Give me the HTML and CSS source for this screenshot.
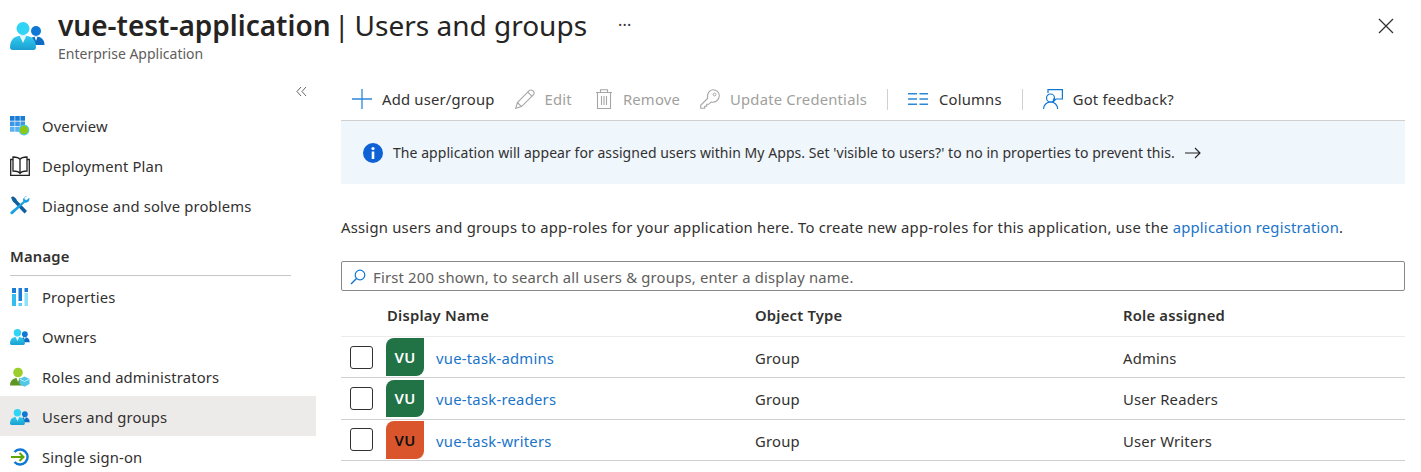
FILE: index.html
```html
<!DOCTYPE html>
<html lang="en">
<head>
    <meta charset="UTF-8">
    <meta name="viewport" content="width=device-width, initial-scale=1.0">
    <title>vue-test-application | Users and groups</title>
    <link rel="stylesheet" href="styles.css">
</head>
<body>

<svg class="sprite">
    <defs>
        <linearGradient id="bodyFill" x1="0" y1="0" x2="0" y2="1">
            <stop offset="0" stop-color="#32cdf0"/>
            <stop offset="1" stop-color="#1b9fd0"/>
        </linearGradient>
    </defs>
    <symbol id="people" viewBox="0 0 35 28">
        <circle cx="26" cy="9" r="5" fill="#0f78d4"/>
        <path d="M20 23c-1-5 1-8.500 6-8.500s8.500 3 8.500 8.500z" fill="#0f6cc4"/>
        <path d="M24.500 14.500h3L26 19z" fill="#fff"/>
        <circle cx="13" cy="6.500" r="6.500" fill="#32d4f5"/>
        <path d="M0 25.500C0 17 5 13.500 13 13.500s13 3.500 13 12c0 1.500-1 2.500-2.500 2.500h-21C1 28 0 27 0 25.500z" fill="url(#bodyFill)"/>
        <path d="M9.500 13.500h7L13 21z" fill="#e8f8fd"/>
    </symbol>
</svg>

<header class="page-header">
    <svg class="app-icon"><use href="#people"/></svg>
    <div class="title-block">
        <div class="title-line">
            <h1><b>vue-test-application</b><span class="title-bar">|</span>Users and groups</h1>
            <span class="more">···</span>
        </div>
        <div class="subtitle">Enterprise Application</div>
    </div>
    <svg class="close" viewBox="0 0 16 16"><path d="M1 1l14 14M15 1L1 15" stroke="#333" stroke-width="1.300" fill="none"/></svg>
</header>

<div class="layout">
    <nav class="sidebar">
        <div class="collapse">
            <svg viewBox="0 0 11 11"><path d="M5 1L1 5.500l4 4.500M10 1L6 5.500l4 4.500" stroke="#666" fill="none"/></svg>
        </div>
        <a class="nav-item">
            <svg viewBox="0 0 20 20"><path d="M0 0h4.600v4.800H0zM5.200 0h4.600v4.800H5.200zM10.400 0H15v4.800h-4.600z" fill="#1b7cd6"/><path d="M0 5.500h4.600v4.800H0zM5.200 5.500h4.600v4.800H5.200zM10.400 5.500H15v4.800h-4.600z" fill="#3a96e6"/><path d="M0 11h4.600v4.800H0zM5.200 11h4.600v4.800H5.200z" fill="#5ab0f0"/><circle cx="14" cy="14" r="4.800" fill="#8cc814" stroke="#50c7e8" stroke-width="1.200"/></svg>
            Overview
        </a>
        <a class="nav-item">
            <svg viewBox="0 0 20 20"><path d="M3 1c3 0 6 .8 7 2.500C11 1.800 14 1 17 1v14c-3 0-6 .8-7 2.500C9 15.800 6 15 3 15zM10 3.500v14" fill="none" stroke="#222" stroke-width="1.300"/><path d="M3 3.500H.7v15.800H19.300V3.500H17" fill="none" stroke="#222" stroke-width="1.300"/></svg>
            Deployment Plan
        </a>
        <a class="nav-item">
            <svg viewBox="0 0 20 20"><path d="M1 1.500l2-1.300 3 2.300 1 2 10 10.500-2.500 2.500L4.500 7 2.800 5.500z" fill="#0f5f9e"/><path d="M17.500 0c-2.500 0-4.500 2-4.500 4l.3 1.300L1 15.500c-.8.800-.8 1.500-.2 2.200s1.500.8 2.200 0L14.700 6.700c2.300.6 4.800-1.300 4.800-4l-.3-1-2.500 2.200-2-.5-.3-1.900z" fill="#1ba1e2"/></svg>
            Diagnose and solve problems
        </a>
        <div class="nav-heading">Manage</div>
        <a class="nav-item">
            <svg viewBox="0 0 20 20"><path d="M2 1h4v5H2z" fill="#1b7cd6"/><path d="M2 7h4v12H2z" fill="#32bff0"/><path d="M8.500 1h3.500v13H8.500z" fill="#1b7cd6"/><path d="M8.500 16h3.500v3H8.500z" fill="#5ad0f5"/><path d="M14.500 1H18v4h-3.500z" fill="#1b7cd6"/><path d="M14.500 6H18v13h-3.500z" fill="#8fe0fa"/></svg>
            Properties
        </a>
        <a class="nav-item">
            <svg><use href="#people"/></svg>
            Owners
        </a>
        <a class="nav-item">
            <svg viewBox="0 0 20 20"><circle cx="8" cy="5.500" r="4.800" fill="#9ccf2e"/><path d="M0 18.500c0-5 3-7.500 8-7.500s8 2.500 8 7.500z" fill="#5e9624"/><path d="M6.500 11h3L8 15z" fill="#fff"/><path d="M14.500 9.500l5 2.500v5l-5 2.800-5-2.800v-5z" fill="#50c7e8"/><path d="M9.500 12l5 2.500 5-2.500" stroke="#b5ecfa" fill="none"/></svg>
            Roles and administrators
        </a>
        <a class="nav-item nav-item-active">
            <svg><use href="#people"/></svg>
            Users and groups
        </a>
        <a class="nav-item">
            <svg viewBox="0 0 20 20"><path d="M4.500 5a7.500 7.500 0 1 1 0 10" fill="none" stroke="#0f78d4" stroke-width="2.400"/><path d="M1 10h12.500M9.500 6l4 4-4 4" fill="none" stroke="#5ea600" stroke-width="2"/></svg>
            Single sign-on
        </a>
    </nav>

    <main class="content">
        <div class="toolbar">
            <button class="tool">
                <svg viewBox="0 0 20 20"><path d="M10 0v20M0 10h20" stroke="#2b88d8" stroke-width="1.300" fill="none"/></svg>
                Add user/group
            </button>
            <button class="tool tool-off tool-edit">
                <svg viewBox="0 0 20 20"><path d="M.7 19.300l1.700-5.800L14.200 1.700c1-1 2.600-1 3.600 0l.5.500c1 1 1 2.600 0 3.600L6.500 17.600zM2.400 13.500l4.100 4.100M12.800 3.200l4 4" stroke="#a6a6a6" stroke-width="1.100" fill="none"/></svg>
                Edit
            </button>
            <button class="tool tool-off">
                <svg class="icon-narrow" viewBox="0 0 18 20"><path d="M1 3.500h16M5.500 3.500V.8h7v2.700M2.500 3.500v16h13v-16M6.500 7v9M9 7v9M11.500 7v9" stroke="#a6a6a6" stroke-width="1.100" fill="none"/></svg>
                Remove
            </button>
            <button class="tool tool-off">
                <svg viewBox="0 0 20 20"><path d="M7.500 9.500L.7 16.300v3h4v-2h2v-2h2l2.300-2.300c4 1 8.300-1.700 8.300-6.200 0-3.500-2.800-6.100-6.300-6.100S6.700 4.800 7.500 9.500z" stroke="#a6a6a6" stroke-width="1.100" fill="none"/><circle cx="14.500" cy="5.500" r="1.400" fill="none" stroke="#a6a6a6"/></svg>
                Update Credentials
            </button>
            <span class="tool-sep"></span>
            <button class="tool">
                <svg class="icon-wide" viewBox="0 0 20 12"><path d="M0 .8h9M0 6h9M0 11.200h9M11.500 .8h8.500M11.500 6h8.500M11.500 11.200h8.500" stroke="#2b88d8" stroke-width="1.400" fill="none"/></svg>
                Columns
            </button>
            <span class="tool-sep"></span>
            <button class="tool">
                <svg viewBox="0 0 20 20"><path d="M5 4V.6h14.400V10H14M16 10h-3l-2.500 2.500V9.500" stroke="#0f78d4" stroke-width="1.200" fill="none"/><circle cx="7.500" cy="9" r="4" stroke="#0f78d4" stroke-width="1.200" fill="none"/><path d="M.6 20c0-4 3-7 7-7s7 3 7 7" stroke="#0f78d4" stroke-width="1.200" fill="none"/></svg>
                Got feedback?
            </button>
        </div>

        <div class="banner">
            <svg class="info-icon" viewBox="0 0 20 20"><circle cx="10" cy="10" r="10" fill="#0f62d6"/><rect x="8.700" y="8.500" width="2.600" height="7.500" fill="#fff"/><circle cx="10" cy="5.500" r="1.600" fill="#fff"/></svg>
            <span>The application will appear for assigned users within My Apps. Set 'visible to users?' to no in properties to prevent this.</span>
            <svg class="arrow" viewBox="0 0 16 12"><path d="M0 6h15M10 1l5 5-5 5" stroke="#222" stroke-width="1.100" fill="none"/></svg>
        </div>

        <p class="intro">Assign users and groups to app-roles for your application here. To create new app-roles for this application, use the <a>application registration</a>.</p>

        <div class="search">
            <svg viewBox="0 0 16 16"><circle cx="10" cy="6" r="4.800" stroke="#0f78d4" stroke-width="1.200" fill="none"/><path d="M6.500 9.500L1 15" stroke="#0f78d4" stroke-width="1.400"/></svg>
            <span>First 200 shown, to search all users &amp; groups, enter a display name.</span>
        </div>

        <div class="row row-head">
            <div class="col-name">Display Name</div>
            <div class="col-type">Object Type</div>
            <div class="col-role">Role assigned</div>
        </div>
        <div class="row">
            <span class="check"></span>
            <div class="col-name"><span class="avatar avatar-green">VU</span><a>vue-task-admins</a></div>
            <div class="col-type">Group</div>
            <div class="col-role">Admins</div>
        </div>
        <div class="row">
            <span class="check"></span>
            <div class="col-name"><span class="avatar avatar-green">VU</span><a>vue-task-readers</a></div>
            <div class="col-type">Group</div>
            <div class="col-role">User Readers</div>
        </div>
        <div class="row">
            <span class="check"></span>
            <div class="col-name"><span class="avatar avatar-orange">VU</span><a>vue-task-writers</a></div>
            <div class="col-type">Group</div>
            <div class="col-role">User Writers</div>
        </div>
    </main>
</div>

</body>
</html>
```
FILE: styles.css
```css
* {
    box-sizing: border-box;
}
body {
    font-family: "Noto Sans", "Open Sans", sans-serif;
    font-size: 14.8px;
    letter-spacing: 0.2px;
    color: #323130;
    margin: 0;
    height: 472px;
    overflow: hidden;
    background-color: white;
}
a {
    color: #1a74c9;
}
.sprite {
    display: block;
    width: 0;
    height: 0;
}

.page-header {
    display: flex;
    height: 70px;
    padding: 8px 27px 0 10px;
    align-items: flex-start;
}
.app-icon {
    width: 35px;
    height: 28px;
    margin-top: 14px;
    margin-right: 13px;
}
.title-block {
    flex: 1;
}
.title-line {
    display: flex;
    align-items: center;
    height: 34px;
}
h1 {
    margin: 0;
    font-size: 28px;
    font-weight: 400;
    line-height: 34px;
    letter-spacing: 0;
    color: #252423;
    white-space: nowrap;
}
h1 b {
    font-weight: 600;
}
.title-bar {
    margin: 0 5px 0 3.500px;
}
.more {
    margin-left: 31px;
    font-size: 16px;
    line-height: 16px;
}
.subtitle {
    font-size: 14px;
    line-height: 24px;
    letter-spacing: 0;
    color: #605e5c;
}
.close {
    width: 16px;
    height: 16px;
    margin-top: 10px;
}

.layout {
    display: flex;
}
.sidebar {
    width: 316px;
    flex-shrink: 0;
}
.collapse {
    height: 36px;
    display: flex;
    justify-content: flex-end;
    align-items: center;
    padding: 6px 9px 0 0;
}
.collapse svg {
    width: 11px;
    height: 11px;
}
.nav-item {
    display: flex;
    align-items: center;
    height: 40px;
    padding-left: 10px;
    gap: 12px;
    letter-spacing: 0.15px;
    color: #323130;
    white-space: nowrap;
}
.nav-item svg {
    width: 20px;
    height: 20px;
    flex-shrink: 0;
}
.nav-item-active {
    background-color: #edebe9;
}
.nav-heading ~ .nav-item {
    padding-top: 2px;
}
.nav-heading {
    margin: 16px 25px 0 10px;
    padding-top: 4px;
    height: 34px;
    font-weight: 600;
    border-bottom: 1px solid #c8c6c4;
}

.content {
    width: 1064px;
    margin-left: 25px;
}
.toolbar {
    display: flex;
    align-items: center;
    height: 51px;
    padding: 8px 0 0 11px;
    border-bottom: 1px solid #d2d0ce;
}
.tool {
    display: flex;
    align-items: center;
    gap: 10px;
    padding: 0 20px 0 0;
    font: inherit;
    letter-spacing: inherit;
    color: #323130;
    background: none;
    border: none;
    white-space: nowrap;
}
.tool svg {
    width: 20px;
    height: 20px;
}
.tool .icon-wide {
    width: 20px;
    height: 12px;
    margin-right: 1px;
}
.tool .icon-narrow {
    width: 18px;
}
.tool-off {
    color: #a19f9d;
}
.tool-edit {
    padding-right: 23px;
}
.tool-sep {
    width: 1px;
    height: 21px;
    margin-right: 20px;
    background-color: #d2d0ce;
}
.banner {
    display: flex;
    align-items: center;
    height: 63px;
    padding-left: 22px;
    gap: 10px;
    font-size: 14px;
    letter-spacing: 0.055px;
    background-color: #eff6fc;
    white-space: nowrap;
}
.info-icon {
    width: 20px;
    height: 20px;
}
.arrow {
    width: 16px;
    height: 12px;
}
.intro {
    margin: 33px 0 0;
    line-height: 20px;
    letter-spacing: 0.24px;
    white-space: nowrap;
}
.intro a {
    letter-spacing: 0.2px;
}
.search {
    display: flex;
    align-items: center;
    gap: 7px;
    height: 30px;
    margin-top: 24px;
    padding: 2px 0 0 8px;
    border: 1px solid #8a8886;
    border-radius: 2px;
    color: #605e5c;
}
.search svg {
    width: 16px;
    height: 16px;
}
.row {
    display: flex;
    align-items: center;
    height: 41.330px;
    border-bottom: 1px solid #d2d0ce;
}
.row-head {
    height: 46px;
    padding-top: 2px;
    font-weight: 600;
    border-bottom-color: #edebe9;
}
.col-name {
    display: flex;
    align-items: center;
    width: 368px;
    margin-left: 46px;
    gap: 12px;
}
.row .check + .col-name {
    width: 369px;
    margin-left: 13px;
}
.col-name a {
    padding-top: 2px;
    letter-spacing: 0.25px;
}
.col-type {
    width: 368px;
}
.check ~ .col-type,
.check ~ .col-role {
    padding-top: 2px;
}
.check {
    width: 23px;
    height: 23px;
    margin-left: 9px;
    border: 1px solid #323130;
    border-radius: 3px;
}
.avatar {
    display: flex;
    align-items: center;
    justify-content: center;
    width: 38px;
    height: 37.500px;
    font-weight: 600;
    border-radius: 8px 0 8px 0;
}
.avatar-green {
    background-color: #217346;
    color: white;
}
.avatar-orange {
    background-color: #da552c;
    color: #111;
}
```
